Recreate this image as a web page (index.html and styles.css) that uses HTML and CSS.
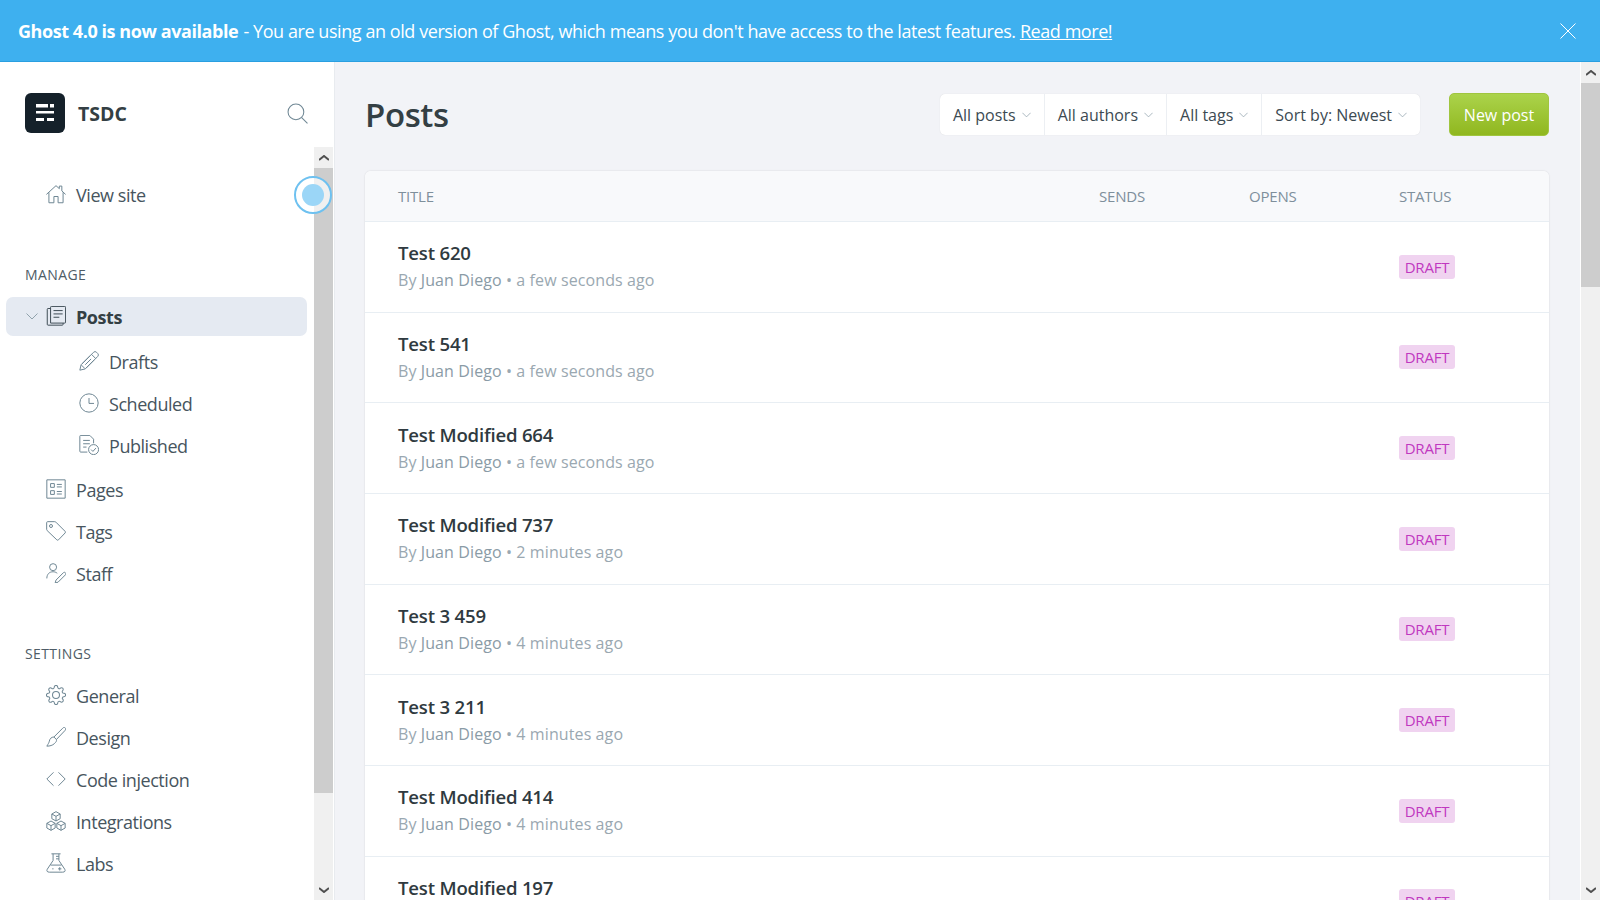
FILE: index.html
```html
<!DOCTYPE html>
<html>
<head>
  <link rel="stylesheet" href="styles.css">
</head>
<body>
  <div class="banner">
    <p><strong>Ghost 4.0 is now available</strong> - You are using an old version of Ghost, which means you don't have access to the latest features. <a href="#">Read more!</a></p>
    <svg class="banner-close" viewBox="0 0 16 16"><path d="M.5.5l15 15M15.500.5l-15 15"/></svg>
  </div>

  <div class="app">
    <aside class="sidebar">
      <div class="brand">
        <div class="logo">
          <svg viewBox="0 0 40 40"><path d="M11 11h12v3.500H11zM25 11h4v3.500h-4zM11 18h18v2.500H11zM11 25h8v3h-8zM22 25h7v3h-7z"/></svg>
        </div>
        <span class="brand-name">TSDC</span>
        <svg class="search" viewBox="0 0 20 20"><circle cx="8.500" cy="8.500" r="7.500"/><path d="M14 14l5.500 5.500"/></svg>
      </div>

      <div class="sidebar-body">
        <nav class="nav">
          <a class="nav-item view-site" href="#">
            <svg class="icon" viewBox="0 0 24 24"><path d="M.5 12.500L12 2l4 3.600V2.500h3v5.800l4.500 4.200M3.500 10v12.500h6V15h5v7.500h6V10"/></svg>
            View site
          </a>

          <h4>Manage</h4>
          <a class="nav-item active" href="#">
            <svg class="caret" viewBox="0 0 12 7"><path d="M.5.5L6 6 11.500.5"/></svg>
            <svg class="icon" viewBox="0 0 24 24"><path d="M5.500 1.500a1 1 0 0 1 1-1h16a1 1 0 0 1 1 1v18a1 1 0 0 1-1 1h-17zM5.500 3H2.500a1 1 0 0 0-1 1v18a1 1 0 0 0 1 1h17a1 1 0 0 0 1-1v-1.500M9 5.500h11M9 9.500h11M9 13.500h7"/></svg>
            Posts
          </a>
          <a class="nav-item sub" href="#">
            <svg class="icon" viewBox="0 0 24 24"><path d="M17.500 1.500a2.500 2.500 0 0 1 3.500 0l1.500 1.500a2.500 2.500 0 0 1 0 3.500L7.500 21.500 1 23l1.500-6.500zM15 4l5 5M13 6l-9.500 9.500M18 11l-9.500 9.500M3 17l4 4M14.500 9.500l-7 7"/></svg>
            Drafts
          </a>
          <a class="nav-item sub" href="#">
            <svg class="icon" viewBox="0 0 24 24"><circle cx="12" cy="12" r="11"/><path d="M12 6v6.500h6"/></svg>
            Scheduled
          </a>
          <a class="nav-item sub" href="#">
            <svg class="icon" viewBox="0 0 24 24"><path d="M10 20.500H2a1 1 0 0 1-1-1V1.500a1 1 0 0 1 1-1h11l4.500 4.500v5M5 6.500h8M5 10.500h8M5 14.500h4"/><circle cx="17.500" cy="17.500" r="6"/><path d="M14.500 17.500l2.200 2.200 3.600-4"/></svg>
            Published
          </a>
          <a class="nav-item pages" href="#">
            <svg class="icon" viewBox="0 0 24 24"><path d="M1 1h22v22H1zM5.500 5.500H10V10H5.500zM5.500 14H10v4.500H5.500zM13 6.500h6M13 9.500h6M13 15h6M13 18h6"/></svg>
            Pages
          </a>
          <a class="nav-item" href="#">
            <svg class="icon" viewBox="0 0 24 24"><path d="M2 .8h8.500a2 2 0 0 1 1.400.6l11 11a1.500 1.500 0 0 1 0 2L15 22.600a1.500 1.500 0 0 1-2 0L1.400 11.500A2 2 0 0 1 .8 10V2A1.200 1.200 0 0 1 2 .8z"/><circle cx="6" cy="6" r="1.800"/></svg>
            Tags
          </a>
          <a class="nav-item" href="#">
            <svg class="icon" viewBox="0 0 24 24"><circle cx="8.500" cy="5" r="4.200"/><path d="M1 18.500c0-5 3-8 7.500-8 1.800 0 3.500.6 5 1.800M21 11.500a1.800 1.800 0 0 1 2.500 2.500l-9 9-3.500 1 1-3.500z"/></svg>
            Staff
          </a>

          <h4 class="settings">Settings</h4>
          <a class="nav-item" href="#">
            <svg class="icon" viewBox="0.500 0.500 23 23"><circle cx="12" cy="12" r="4"/><path d="M19.400 15a1.650 1.650 0 0 0 .33 1.820l.06.06a2 2 0 0 1 0 2.830 2 2 0 0 1-2.830 0l-.06-.06a1.650 1.650 0 0 0-1.820-.33 1.650 1.650 0 0 0-1 1.510V21a2 2 0 0 1-2 2 2 2 0 0 1-2-2v-.09A1.650 1.650 0 0 0 9 19.400a1.650 1.650 0 0 0-1.820.33l-.06.06a2 2 0 0 1-2.830 0 2 2 0 0 1 0-2.830l.06-.06a1.650 1.650 0 0 0 .33-1.820 1.650 1.650 0 0 0-1.510-1H3a2 2 0 0 1-2-2 2 2 0 0 1 2-2h.09A1.650 1.650 0 0 0 4.600 9a1.650 1.650 0 0 0-.33-1.820l-.06-.06a2 2 0 0 1 0-2.830 2 2 0 0 1 2.830 0l.06.06a1.650 1.650 0 0 0 1.820.33H9a1.650 1.650 0 0 0 1-1.510V3a2 2 0 0 1 2-2 2 2 0 0 1 2 2v.09a1.650 1.650 0 0 0 1 1.510 1.650 1.650 0 0 0 1.820-.33l.06-.06a2 2 0 0 1 2.830 0 2 2 0 0 1 0 2.830l-.06.06a1.650 1.650 0 0 0-.33 1.820V9a1.650 1.650 0 0 0 1.510 1H21a2 2 0 0 1 2 2 2 2 0 0 1-2 2h-.09a1.650 1.650 0 0 0-1.510 1z"/></svg>
            General
          </a>
          <a class="nav-item" href="#">
            <svg class="icon" viewBox="0 0 24 24"><path d="M23 1c1 1 .5 2.500-.5 3.500L12.500 15l-3-3L20 1.500c1-1 2-1.500 3-.5zM9.500 12C6.500 12 4.500 14 4 17c-.2 1.500-1.500 3.500-3 6 3.500 0 7-1 9-3 2-2 3-3 2.500-5"/></svg>
            Design
          </a>
          <a class="nav-item" href="#">
            <svg class="icon" viewBox="0 0 24 24"><path d="M9 4l-8 8 8 8M15 4l8 8-8 8"/></svg>
            Code injection
          </a>
          <a class="nav-item" href="#">
            <svg class="icon" viewBox="0 0 24 24"><path d="M12 .8l5 2.800v5.600l-5 2.800-5-2.800V3.600zM7 3.600l5 2.800 5-2.800M12 6.400V12M6 12l5 2.800v5.600L6 23.200 1 20.400v-5.600zM1 14.800l5 2.800 5-2.800M6 17.600v5.600M18 12l5 2.800v5.600l-5 2.800-5-2.800v-5.600zM13 14.800l5 2.800 5-2.800M18 17.600v5.600"/></svg>
            Integrations
          </a>
          <a class="nav-item" href="#">
            <svg class="icon" viewBox="0 0 24 24"><path d="M6.500 1h11M8.500 1v8L1.500 19.500C.3 21.500 1.500 23 4 23h16c2.500 0 3.700-1.500 2.500-3.500L15.500 9V1M5.500 14.500h13M12 4h3.500M12 7h3.500M7.500 19h1.500M14.500 19h4M16.500 17v4"/></svg>
            Labs
          </a>
        </nav>

        <div class="scrollbar">
          <button class="sb-btn"><svg viewBox="0 0 10 6"><path d="M0 5l5-4 5 4"/></svg></button>
          <div class="sb-track"><div class="sb-thumb thumb-side"></div></div>
          <button class="sb-btn"><svg viewBox="0 0 10 6"><path d="M0 1l5 4 5-4"/></svg></button>
        </div>
        <div class="touch-dot"><span></span></div>
      </div>
    </aside>

    <main class="content">
      <div class="content-scroll">
        <header class="head">
          <h1>Posts</h1>
          <div class="filters">
            <div class="filter">All posts <svg viewBox="0 0 12 7"><path d="M.5.5L6 6 11.500.5"/></svg></div>
            <div class="filter">All authors <svg viewBox="0 0 12 7"><path d="M.5.5L6 6 11.500.5"/></svg></div>
            <div class="filter">All tags <svg viewBox="0 0 12 7"><path d="M.5.5L6 6 11.500.5"/></svg></div>
            <div class="filter">Sort by: Newest <svg viewBox="0 0 12 7"><path d="M.5.5L6 6 11.500.5"/></svg></div>
          </div>
          <a class="new-post" href="#">New post</a>
        </header>

        <section class="posts">
          <div class="row row-head">
            <span>Title</span><span>Sends</span><span>Opens</span><span>Status</span>
          </div>
          <div class="row">
            <div class="post"><h3>Test 620</h3><p class="meta">By <b>Juan Diego</b> • a few seconds ago</p></div>
            <span></span><span></span><div><span class="badge">Draft</span></div>
          </div>
          <div class="row">
            <div class="post"><h3>Test 541</h3><p class="meta">By <b>Juan Diego</b> • a few seconds ago</p></div>
            <span></span><span></span><div><span class="badge">Draft</span></div>
          </div>
          <div class="row">
            <div class="post"><h3>Test Modified 664</h3><p class="meta">By <b>Juan Diego</b> • a few seconds ago</p></div>
            <span></span><span></span><div><span class="badge">Draft</span></div>
          </div>
          <div class="row">
            <div class="post"><h3>Test Modified 737</h3><p class="meta">By <b>Juan Diego</b> • 2 minutes ago</p></div>
            <span></span><span></span><div><span class="badge">Draft</span></div>
          </div>
          <div class="row">
            <div class="post"><h3>Test 3 459</h3><p class="meta">By <b>Juan Diego</b> • 4 minutes ago</p></div>
            <span></span><span></span><div><span class="badge">Draft</span></div>
          </div>
          <div class="row">
            <div class="post"><h3>Test 3 211</h3><p class="meta">By <b>Juan Diego</b> • 4 minutes ago</p></div>
            <span></span><span></span><div><span class="badge">Draft</span></div>
          </div>
          <div class="row">
            <div class="post"><h3>Test Modified 414</h3><p class="meta">By <b>Juan Diego</b> • 4 minutes ago</p></div>
            <span></span><span></span><div><span class="badge">Draft</span></div>
          </div>
          <div class="row">
            <div class="post"><h3>Test Modified 197</h3><p class="meta">By <b>Juan Diego</b> • 4 minutes ago</p></div>
            <span></span><span></span><div><span class="badge">Draft</span></div>
          </div>
        </section>
      </div>

      <div class="scrollbar">
        <button class="sb-btn"><svg viewBox="0 0 10 6"><path d="M0 5l5-4 5 4"/></svg></button>
        <div class="sb-track"><div class="sb-thumb thumb-main"></div></div>
        <button class="sb-btn"><svg viewBox="0 0 10 6"><path d="M0 1l5 4 5-4"/></svg></button>
      </div>
    </main>
  </div>
</body>
</html>
```

FILE: styles.css
```css
* {
  box-sizing: border-box;
}

html, body {
  height: 100%;
}

body {
  margin: 0;
  display: flex;
  flex-direction: column;
  overflow: hidden;
  font-family: "Open Sans", "Noto Sans", sans-serif;
  color: #3c4a52;
  background-color: #f2f3f7;
}

svg {
  display: block;
  fill: none;
}

/* top banner */
.banner {
  flex: none;
  height: 62px;
  padding: 0 24px 0 18px;
  display: flex;
  align-items: center;
  justify-content: space-between;
  background-color: #3eb0ef;
  border-bottom: 1px solid #2a9fe0;
  color: #ffffff;
}

.banner p {
  margin: 0;
  font-size: 18px;
  letter-spacing: -0.43px;
}

.banner strong {
  margin-right: 1px;
}

.banner a {
  color: #ffffff;
}

.banner-close {
  width: 16px;
  height: 16px;
  stroke: #ffffff;
}

.app {
  flex: 1;
  min-height: 0;
  display: flex;
}

/* sidebar */
.sidebar {
  flex: none;
  width: 335px;
  display: flex;
  flex-direction: column;
  background-color: #ffffff;
  border-right: 1px solid #e8ebef;
}

.brand {
  flex: none;
  height: 85px;
  padding: 17px 26px 0 25px;
  display: flex;
  align-items: center;
}

.logo {
  width: 40px;
  height: 40px;
  border-radius: 6px;
  background-color: #15212a;
}

.logo path {
  fill: #ffffff;
}

.brand-name {
  margin-left: 13px;
  font-size: 19.5px;
  font-weight: 700;
  color: #343f44;
}

.search {
  margin-left: auto;
  width: 21px;
  height: 21px;
  stroke: #6f8794;
}

.sidebar-body {
  flex: 1;
  min-height: 0;
  position: relative;
  display: flex;
}

.sidebar-body > .scrollbar {
  margin-right: 1px;
}

.nav {
  flex: 1;
  overflow: hidden;
  padding: 27px 7px 0 6px;
}

.nav h4 {
  margin: 49px 0 0 19px;
  height: 32px;
  font-size: 14px;
  line-height: 20px;
  font-weight: 400;
  letter-spacing: 0.4px;
  text-transform: uppercase;
  color: #4e5c66;
}

.nav h4.settings {
  margin-top: 49px;
  height: 31px;
}

.nav-item {
  height: 42px;
  padding-left: 70px;
  display: flex;
  align-items: center;
  position: relative;
  font-size: 18px;
  letter-spacing: -0.45px;
  color: #47555e;
  text-decoration: none;
}

.nav-item .icon {
  position: absolute;
  left: 40px;
  top: 10px;
  width: 20px;
  height: 20px;
  stroke: #6f8794;
  stroke-width: 1.2;
}

.nav-item.active {
  height: 39px;
  margin-bottom: 5px;
  border-radius: 7px;
  background-color: #e5eaf2;
  font-weight: 700;
  color: #343f44;
}

.nav-item.active .icon {
  top: 9px;
  stroke: #3f4d56;
}

.caret {
  position: absolute;
  left: 20px;
  top: 16px;
  width: 12px;
  height: 7px;
  stroke: #90a2ac;
}

.nav-item.sub {
  padding-left: 103px;
}

.nav-item.sub .icon {
  left: 73px;
}

.nav-item.pages {
  margin-top: 2px;
}

/* fake native scrollbars */
.scrollbar {
  flex: none;
  width: 19px;
  display: flex;
  flex-direction: column;
  background-color: #f0f0f0;
}

.sb-btn {
  flex: none;
  height: 21px;
  padding: 0;
  border: 0;
  display: flex;
  align-items: center;
  justify-content: center;
  background-color: #f0f0f0;
}

.sb-btn svg {
  width: 10px;
  height: 6px;
  stroke: #505050;
  stroke-width: 2;
}

.sb-track {
  flex: 1;
}

.sb-thumb {
  background-color: #cdcdcd;
}

.thumb-side {
  height: 625px;
}

.thumb-main {
  height: 204px;
}

.touch-dot {
  position: absolute;
  left: 294px;
  top: 29px;
  width: 38px;
  height: 38px;
  padding: 6px;
  border-radius: 50%;
  border: 2px solid #6ec1f0;
  background-color: rgba(255, 255, 255, 0.7);
}

.touch-dot span {
  display: block;
  width: 22px;
  height: 22px;
  border-radius: 50%;
  background-color: #9bd6f7;
}

/* main column */
.content {
  flex: 1;
  min-width: 0;
  display: flex;
}

.content > .scrollbar {
  width: 20px;
  border-left: 1px solid #ffffff;
}

.content-scroll {
  flex: 1;
  min-width: 0;
  overflow: hidden;
  padding: 31px 31px 0 30px;
}

.head {
  height: 43px;
  margin-bottom: 35px;
  display: flex;
  align-items: center;
}

.head h1 {
  margin: 0 auto 0 0;
  font-size: 33px;
  font-weight: 600;
  letter-spacing: -0.4px;
  color: #343f44;
}

.filters {
  height: 41px;
  display: flex;
  border-radius: 5px;
  background-color: #ffffff;
  box-shadow: 0 0 1px rgba(0, 0, 0, 0.15);
}

.filter {
  padding: 0 13px;
  display: flex;
  align-items: center;
  gap: 6px;
  border-left: 1px solid #eceff3;
  font-size: 16px;
  color: #3c4a52;
}

.filter:first-child {
  border-left: 0;
}

.filter svg {
  width: 9px;
  height: 6px;
  stroke: #90a2ac;
}

.new-post {
  margin-left: 29px;
  width: 100px;
  height: 43px;
  display: flex;
  align-items: center;
  justify-content: center;
  border-radius: 5px;
  border: 1px solid #a0c53f;
  background: linear-gradient(#abd34b, #90b71f);
  font-size: 16px;
  color: #ffffff;
  text-decoration: none;
}

/* post list */
.posts {
  border-radius: 6px 6px 0 0;
  background-color: #ffffff;
  box-shadow: 0 0 2px rgba(0, 0, 0, 0.14);
}

.row {
  height: 90.67px;
  padding-left: 33px;
  display: grid;
  grid-template-columns: 701px 150px 150px 1fr;
  align-items: center;
  border-bottom: 1px solid #e8eef3;
}

.row-head {
  height: 51px;
  border-radius: 6px 6px 0 0;
  background-color: #f8f9fb;
  font-size: 15px;
  letter-spacing: -0.2px;
  text-transform: uppercase;
  color: #7e8f9b;
}

.post {
  padding-bottom: 2px;
}

.row h3 {
  margin: 0;
  font-size: 18.6px;
  font-weight: 600;
  letter-spacing: -0.2px;
  color: #2f3a40;
}

.meta {
  margin: 4px 0 0;
  font-size: 16px;
  letter-spacing: 0.1px;
  color: #9aa8b1;
}

.meta b {
  font-weight: 400;
  color: #8a9ba6;
}

.badge {
  display: block;
  height: 24px;
  width: 56px;
  text-align: center;
  border-radius: 3px;
  background-color: #f0d3f0;
  font-size: 15px;
  line-height: 24px;
  letter-spacing: -0.2px;
  text-transform: uppercase;
  color: #c038c0;
}
```
